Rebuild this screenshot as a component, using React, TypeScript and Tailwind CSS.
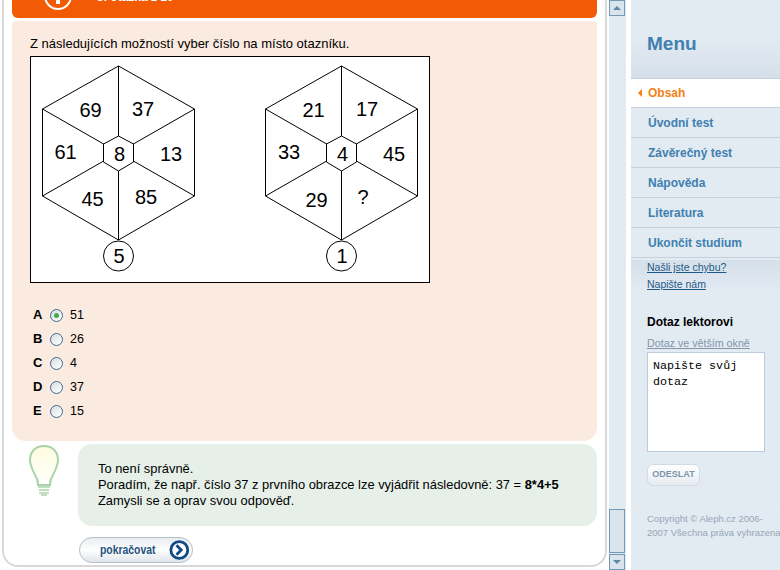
const sans = { fontFamily: '"Liberation Sans", Arial, sans-serif' };

const menu = ['Úvodní test', 'Závěrečný test', 'Nápověda', 'Literatura', 'Ukončit studium'];
const answers = [
  { key: 'A', value: '51', checked: true },
  { key: 'B', value: '26' },
  { key: 'C', value: '4' },
  { key: 'D', value: '37' },
  { key: 'E', value: '15' },
];

function Hexagon({ cx, center, bottom, labels }: {
  cx: number; center: string; bottom: string; labels: [string, number, number][];
}) {
  const x = (n: number) => cx + n;
  return (
    <g>
      <polygon
        points={`${x(0)},9 ${x(76)},52 ${x(76)},139 ${x(0)},183 ${x(-76)},139 ${x(-76)},52`}
        fill="white"
        stroke="black"
      />
      <line x1={x(0)} y1={9} x2={x(0)} y2={183} stroke="black" />
      <line x1={x(-76)} y1={52} x2={x(76)} y2={139} stroke="black" />
      <line x1={x(76)} y1={52} x2={x(-76)} y2={139} stroke="black" />
      <polygon
        points={`${x(0)},79 ${x(15)},87 ${x(15)},105 ${x(0)},114 ${x(-15)},105 ${x(-15)},87`}
        fill="white"
        stroke="black"
      />
      <circle cx={x(0)} cy={199} r={15} fill="white" stroke="black" />
      {labels.map(([t, lx, ly]) => (
        <text key={t} x={x(lx)} y={ly} fontSize="20" textAnchor="middle" fill="black">{t}</text>
      ))}
      <text x={x(1)} y={104} fontSize="20" textAnchor="middle" fill="black">{center}</text>
      <text x={x(0.5)} y={206} fontSize="20" textAnchor="middle" fill="black">{bottom}</text>
    </g>
  );
}

function Radio({ checked }: { checked?: boolean }) {
  return (
    <span className="flex h-[13px] w-[13px] items-center justify-center rounded-full border border-[#3f6b8f] bg-gradient-to-br from-[#d8dde0] to-white">
      {checked && <span className="h-[5px] w-[5px] rounded-full bg-[#3fae49]" />}
    </span>
  );
}

export default function App() {
  return (
    <div className="flex h-[570px] w-[780px] overflow-hidden bg-white text-[12px] text-black" style={sans}>
      {/* Main content */}
      <div className="ml-[2px] h-[567px] w-[605px] shrink-0 rounded-b-[16px] border-x-2 border-b-2 border-[#d8d8d8] bg-white px-[8px]">
        <div className="flex h-[18px] overflow-hidden rounded-b-[6px] bg-[#f25a03] pl-[30px]">
          <svg width="32" height="11" viewBox="0 0 32 11" className="shrink-0">
            <circle cx="16" cy="-4" r="13" fill="none" stroke="white" strokeWidth="2" />
            <rect x="14" y="0" width="4" height="4" fill="white" />
          </svg>
          <span className="-mt-[10px] ml-[23px] text-[12px] font-bold leading-[14px] text-white">3. otázka z 10</span>
        </div>

        <div className="mt-[3px] h-[420px] rounded-b-[14px] rounded-t-[4px] bg-[#fbeadf] pl-[18px] pt-[15px]">
          <p className="text-[13px] leading-[16px]">Z následujících možností vyber číslo na místo otazníku.</p>
          <div className="mt-[4px] h-[227px] w-[400px] border border-black bg-white">
            <svg width="398" height="225" viewBox="0 0 398 225" style={sans}>
              <Hexagon
                cx={87.5}
                center="8"
                bottom="5"
                labels={[['69', -28, 60], ['37', 24.5, 59], ['61', -53, 102], ['13', 52.5, 104], ['45', -26, 149], ['85', 27.5, 147]]}
              />
              <Hexagon
                cx={310.5}
                center="4"
                bottom="1"
                labels={[['21', -28, 60], ['17', 25.5, 59], ['33', -52.5, 102], ['45', 52.5, 104], ['29', -25, 150], ['?', 21.5, 147]]}
              />
            </svg>
          </div>

          <div className="mt-[23px] flex flex-col gap-[6px]">
            {answers.map((a) => (
              <div key={a.key} className="flex h-[18px] items-center">
                <span className="w-[20px] pl-[3px] text-[13px] font-bold">{a.key}</span>
                <Radio checked={a.checked} />
                <span className="ml-[7px] text-[12.5px]">{a.value}</span>
              </div>
            ))}
          </div>
        </div>

        <div className="mt-[3px] flex">
          <svg width="66" height="56" viewBox="0 0 66 56" className="shrink-0">
            <defs>
              <linearGradient id="bulb" x1="0" y1="0" x2="0" y2="1">
                <stop offset="0" stopColor="#fdfbdc" />
                <stop offset="1" stopColor="#ffffff" />
              </linearGradient>
            </defs>
            <path
              d="M32 2C23 2 18 8 18 16c0 6 3 10 5 15 2 3 3 6 3 10h12c0-4 1-7 3-10 2-5 5-9 5-15C46 8 41 2 32 2Z"
              fill="url(#bulb)"
              stroke="#a9d3a9"
              strokeWidth="2"
            />
            <path d="M26 43h12M27 46h10M27 49h10M29 51h6" stroke="#a9d3a9" strokeWidth="1.6" />
          </svg>
          <div className="h-[82px] w-[519px] rounded-[14px] bg-[#e6f0e9] pl-[20px] pt-[17px] text-[12.9px] leading-[16px]">
            <p>To není správně.</p>
            <p>Poradím, že např. číslo 37 z prvního obrazce lze vyjádřit následovně: 37 = <b>8*4+5</b></p>
            <p>Zamysli se a oprav svou odpověď.</p>
          </div>
        </div>

        <div className="ml-[67px] mt-[11px] flex h-[26px] w-[114px] items-center justify-between rounded-full border border-[#b5bec6] bg-gradient-to-b from-[#e8edf2] via-white to-[#dfe5ea] pl-[20px] pr-[2px]">
          <span className="origin-left scale-x-[0.8] text-[13px] font-bold text-[#24527f]">pokračovat</span>
          <svg width="22" height="22" viewBox="0 0 22 22">
            <circle cx="11" cy="11" r="9" fill="white" stroke="#104a82" strokeWidth="3" />
            <path d="M8 6l5 5-5 5" fill="none" stroke="#104a82" strokeWidth="3" />
          </svg>
        </div>
      </div>

      {/* Scrollbar */}
      <div className="ml-[2px] flex h-full w-[17px] shrink-0 flex-col bg-[#e2eaf2]">
        <div className="flex h-[16px] w-[16px] items-center justify-center border border-[#6f9ab8] bg-[#dae4ec]">
          <span className="h-0 w-0 border-x-[4px] border-b-[4px] border-x-transparent border-b-[#5f87a6]" />
        </div>
        <div className="mt-auto h-[44px] w-[16px] border border-[#6f9ab8] bg-[#dae4ec]" />
        <div className="mt-[1px] flex h-[16px] w-[16px] items-center justify-center border border-[#6f9ab8] bg-[#dae4ec]">
          <span className="h-0 w-0 border-x-[4px] border-t-[4px] border-x-transparent border-t-[#5f87a6]" />
        </div>
      </div>

      {/* Sidebar */}
      <div className="ml-[5px] h-full w-[149px] shrink-0 bg-[#e2eaf2]">
        <div className="h-[78px] bg-gradient-to-b from-[#e2eaf2] via-[#e2eaf2] to-[#d5e0ea] pl-[16px] pt-[34px]">
          <h1 className="text-[19px] font-bold leading-[20px] text-[#3f80b0]">Menu</h1>
        </div>
        <div className="flex h-[30px] items-center border-y border-[#c5d0dc] bg-white pl-[17px] text-[12px] font-bold text-[#f77f16]">
          <span className="-ml-[10px] mr-[6px] h-0 w-0 border-y-[4px] border-r-[4px] border-y-transparent border-r-[#f77f16]" />
          Obsah
        </div>
        {menu.map((m) => (
          <div key={m} className="flex h-[30px] items-center border-b border-[#c5d0dc] pl-[17px] text-[12px] font-bold text-[#3f80b0]">
            {m}
          </div>
        ))}
        <div className="bg-gradient-to-b from-[#d5e0ea] to-[#e2eaf2] to-[10%] pb-[40px] pl-[16px]">
          <a className="mt-[2px] block text-[10.5px] leading-[14px] text-[#1f5a86] underline">Našli jste chybu?</a>
          <a className="mt-[3px] block text-[10.5px] leading-[14px] text-[#1f5a86] underline">Napište nám</a>
          <h2 className="mt-[24px] text-[12px] font-bold leading-[14px]">Dotaz lektorovi</h2>
          <a className="mt-[7px] block text-[10.7px] leading-[14px] text-[#8296aa] underline">Dotaz ve větším okně</a>
          <div
            className="mt-[2px] h-[100px] w-[118px] border border-[#bccbda] bg-white pl-[5px] pt-[5px] text-[11.7px] leading-[16px]"
            style={{ fontFamily: '"Liberation Mono", monospace' }}
          >
            Napište svůj dotaz
          </div>
          <div className="mt-[12px] flex h-[22px] w-[53px] items-center justify-center rounded-[6px] border border-[#d3dbe3] bg-gradient-to-b from-white to-[#e6ebf0] text-[9px] font-bold text-[#7a94ad]">
            ODESLAT
          </div>
          <p className="mt-[26px] whitespace-nowrap text-[9.5px] leading-[14px] text-[#97a7b7]">
            Copyright © Aleph.cz 2006-
            <br />
            2007 Všechna práva vyhrazena
          </p>
        </div>
      </div>
    </div>
  );
}
